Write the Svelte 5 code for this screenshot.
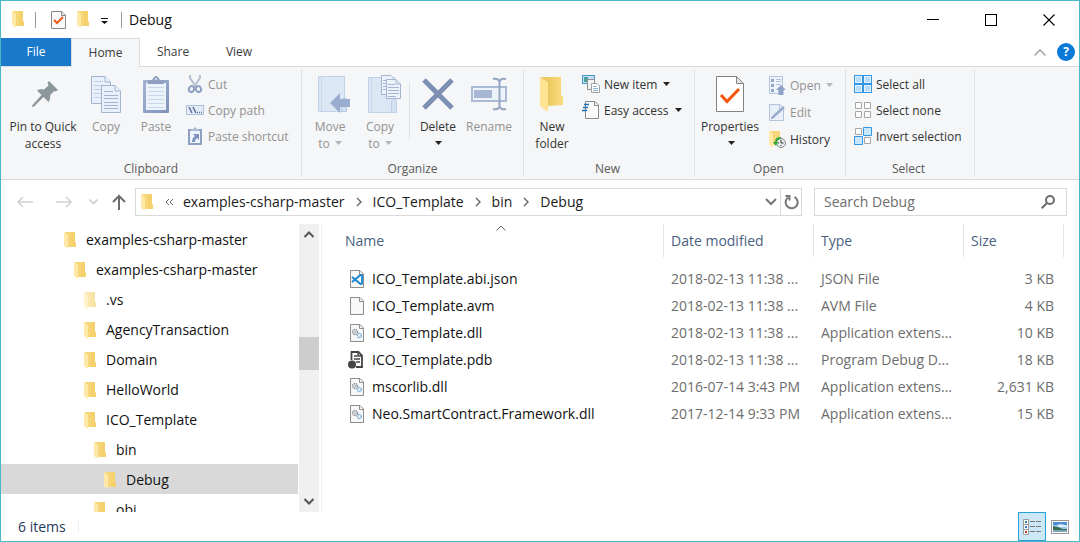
<script>
  const tabs = ['Home', 'Share', 'View'];
  const crumbs = ['examples-csharp-master', 'ICO_Template', 'bin', 'Debug'];
  const tree = [
    { name: 'examples-csharp-master', level: 0 },
    { name: 'examples-csharp-master', level: 1 },
    { name: '.vs', level: 2, hidden: true },
    { name: 'AgencyTransaction', level: 2 },
    { name: 'Domain', level: 2 },
    { name: 'HelloWorld', level: 2 },
    { name: 'ICO_Template', level: 2 },
    { name: 'bin', level: 3 },
    { name: 'Debug', level: 4 },
    { name: 'obj', level: 3 },
  ];
  const files = [
    { name: 'ICO_Template.abi.json', icon: 'code', date: '2018-02-13 11:38 ...', type: 'JSON File', size: '3 KB' },
    { name: 'ICO_Template.avm', icon: 'blank', date: '2018-02-13 11:38 ...', type: 'AVM File', size: '4 KB' },
    { name: 'ICO_Template.dll', icon: 'dll', date: '2018-02-13 11:38 ...', type: 'Application extens...', size: '10 KB' },
    { name: 'ICO_Template.pdb', icon: 'pdb', date: '2018-02-13 11:38 ...', type: 'Program Debug D...', size: '18 KB' },
    { name: 'mscorlib.dll', icon: 'dll', date: '2016-07-14 3:43 PM', type: 'Application extens...', size: '2,631 KB' },
    { name: 'Neo.SmartContract.Framework.dll', icon: 'dll', date: '2017-12-14 9:33 PM', type: 'Application extens...', size: '15 KB' },
  ];
  let selected = $state(8);
  let activeTab = $state('Home');
  let query = $state('');
</script>

{#snippet folder()}
  <svg width="13" height="17" viewBox="0 0 13 17" aria-hidden="true">
    <path d="M1 0H11V10L12 11V15H4Z" fill="#f7d679" />
    <path d="M7 0H11V10L12 11V15H7Z" fill="#f4cd66" opacity=".6" />
    <path d="M0 0L4 3V17L0 14Z" fill="#ffe9a8" />
  </svg>
{/snippet}

{#snippet caret(dim)}
  <svg class="caret" width="7" height="4" viewBox="0 0 7 4" aria-hidden="true"><path d="M0 0H7L3.5 4Z" fill={dim ? '#b4b6ba' : '#222'} /></svg>
{/snippet}

{#snippet chevron()}
  <svg width="6" height="10" viewBox="0 0 6 10" fill="none" stroke="#666" stroke-width="1.4" aria-hidden="true"><path d="M1 1L5 5L1 9" /></svg>
{/snippet}

<div class="window">
  <header class="titlebar">
    <div class="quick">
      {@render folder()}
      <span class="bar first"></span>
      <button aria-label="Properties" class="qprop">
        <svg width="15" height="19" viewBox="0 0 15 19"><path d="M.5 1.500H11L14.500 5V18.500H.5Z" fill="#f8f9fb" stroke="#888" /><path d="M10.500 1V5.500H15" fill="#ddd" stroke="#888" /><path d="M3 10L6 13L12 7" fill="none" stroke="#f05a1a" stroke-width="2" /></svg>
      </button>
      <button aria-label="New folder" class="qfolder">{@render folder()}</button>
      <button aria-label="Customize toolbar" class="qmore">
        <svg width="7" height="6" viewBox="0 0 7 6"><path d="M0 0H7V1H0ZM0 3H7L3.5 6Z" fill="#111" /></svg>
      </button>
      <span class="bar"></span>
      <h1>Debug</h1>
    </div>
    <div class="controls">
      <button aria-label="Minimize"><svg width="12" height="12"><path d="M0 5.500H12" stroke="#000" /></svg></button>
      <button aria-label="Maximize"><svg width="12" height="12"><rect x=".5" y=".5" width="11" height="11" fill="none" stroke="#000" /></svg></button>
      <button aria-label="Close"><svg width="12" height="12"><path d="M.5 .5L11.500 11.500M11.500 .5L.5 11.500" stroke="#000" stroke-width="1.100" /></svg></button>
    </div>
  </header>

  <nav class="tabs">
    <button class="file">File</button>
    {#each tabs as tab}
      <button class:active={activeTab === tab} onclick={() => (activeTab = tab)}>{tab}</button>
    {/each}
    <div class="help">
      <button aria-label="Collapse ribbon"><svg width="12" height="7" fill="none" stroke="#999" stroke-width="1.300"><path d="M.5 6.500L6 1L11.500 6.500" /></svg></button>
      <button class="round" aria-label="Help">?</button>
    </div>
  </nav>

  <section class="ribbon">
    <div class="group clipboard">
      <div class="tools">
        <button class="big pin">
          <span class="art"><svg width="30" height="26" viewBox="-4 0 30 26" fill="#8c979c"><path d="M17 0L26 9L23.500 10.500L22 10L18 14.500C18.500 17 18 19 16.500 21L11.500 16L2 25.500L.5 26L0 25.500L.5 24L9.500 14L5 9.500C7 8 9.500 8 12 8.500L16.500 4.500L15.500 2Z" /></svg></span>
          <span>Pin to Quick<br />access</span>
        </button>
        <button class="big copy" disabled>
          <span class="art"><svg width="30" height="37" viewBox="0 0 30 37" fill="#e8f0fb" stroke="#a3b3d0"><path d="M.5 .5H14L19.500 6V27.500H.5Z" /><path d="M14 .5V6H19.500" /><path d="M3 5.500H12M3 9.500H16M3 13.500H16M3 17.500H16M3 21.500H16" stroke="#c3cfe3" /><path d="M10.500 9.500H24L29.500 15V36.500H10.500Z" /><path d="M24 9.500V15H29.500" /><path d="M13 15.500H22M13 19.500H27M13 22.500H27M13 26.500H27M13 29.500H27M13 32.500H27" /></svg></span>
          <span>Copy</span>
        </button>
        <button class="big paste" disabled>
          <span class="art"><svg width="26" height="37" viewBox="0 0 26 37"><defs><linearGradient id="pb" x2="1" y2="1"><stop stop-color="#a4b4d4" /><stop offset="1" stop-color="#7e92bb" /></linearGradient></defs><rect y="4" width="26" height="33" rx="1" fill="url(#pb)" /><path d="M3 7H23V34H3Z" fill="#edf3fb" /><path d="M5 11.500H21M5 15.500H21M5 19.500H21M5 23.500H21M5 27.500H21M5 31.500H21" stroke="#c9d6ea" /><path d="M5 4H9L11 1Q13 -1 15 1L17 4H21V8H5Z" fill="#8fa0c0" /><circle cx="13" cy="3" r="1" fill="#e8eef8" /></svg></span>
          <span>Paste</span>
        </button>
        <div class="stack">
          <button disabled>
            <svg width="18" height="18" viewBox="0 0 18 18" fill="none" stroke-width="2"><path d="M4 0V3L9.500 11M14 0V3L8.500 11" stroke="#b4bfd2" /><ellipse cx="5.500" cy="14" rx="2.500" ry="3" stroke="#8c9fc3" transform="rotate(25 5.500 14)" /><ellipse cx="12.500" cy="14" rx="2.500" ry="3" stroke="#8c9fc3" transform="rotate(-25 12.500 14)" /></svg>
            Cut
          </button>
          <button disabled>
            <svg width="18" height="18" viewBox="0 0 18 18" fill="none"><rect x=".5" y="4.500" width="17" height="9" fill="#e3ecf9" stroke="#b0c0db" /><path d="M3 6L6 12M7 6L10 12" stroke="#5f7198" stroke-width="1.500" /><path d="M11 11.500H12M13 11.500H14M15 11.500H16" stroke="#5f7198" stroke-width="1.500" /></svg>
            Copy path
          </button>
          <button disabled>
            <svg width="18" height="18" viewBox="0 0 18 18"><path d="M2 2H16V18H2Z" fill="#8ea0c4" /><path d="M4 4H14V16H4Z" fill="#edf3fb" /><path d="M5 2H7L9 0L11 2H13V4H5Z" fill="#aebbd4" /><path d="M7 7H13V13L11 11Q9 12 9 15L6 15Q6 11 9 9Z" fill="#7e92bb" /></svg>
            Paste shortcut
          </button>
        </div>
      </div>
      <h2>Clipboard</h2>
    </div>

    <div class="group organize">
      <div class="tools">
        <button class="big" disabled>
          <span class="art"><svg width="40" height="38" viewBox="-8 0 40 38"><path d="M.5 1.500H26.500V36.500H.5Z" fill="#dce7f6" stroke="#bfd0e8" /><path d="M3.500 2V36" stroke="#c9d8ed" /><path d="M23.500 36.500V27Q25 21 28.500 24V36.500Z" fill="#d4e1f2" stroke="#b7c8e2" /><path d="M12 28L22 18V24H32V32H22V38Z" fill="#9badcf" /></svg></span>
          <span>Move<br />to {@render caret(true)}</span>
        </button>
        <button class="big" disabled>
          <span class="art"><svg width="42" height="38" viewBox="-9 0 42 38" stroke="#a3b3d0"><path d="M.5 2.500H26.500V37.500H.5Z" fill="#dce7f6" stroke="#bfd0e8" /><path d="M3.500 3V37" stroke="#c9d8ed" /><path d="M23.500 37.500V27Q25 22 28.500 25V37.500Z" fill="#d4e1f2" stroke="#bfd0e8" /><path d="M13.500 .5H23L26.500 4V19.500H13.500Z" fill="#edf3fb" /><path d="M18.500 4.500H28L32.500 9V23.500H18.500Z" fill="#edf3fb" /><path d="M28 4.500V9H32" fill="none" /><path d="M15 5.500H18M15 8.500H18M15 11.500H18M15 14.500H18M20 9.500H27M20 12.500H31M20 15.500H31M20 18.500H31M20 21.500H28" /></svg></span>
          <span>Copy<br />to {@render caret(true)}</span>
        </button>
        <span class="divider"></span>
        <button class="big">
          <span class="art"><svg width="32" height="32" viewBox="0 0 32 32"><path d="M2 2L30 30M30 2L2 30" stroke="#7d90b4" stroke-width="5" /></svg></span>
          <span>Delete<br />{@render caret(false)}</span>
        </button>
        <button class="big rename" disabled>
          <span class="art"><svg width="36" height="34" viewBox="0 0 36 34" fill="none"><rect x="1" y="10" width="34" height="14" fill="#edf3fb" stroke="#abbbd6" stroke-width="2" /><rect x="3" y="13" width="18" height="8" fill="#a7b7d3" /><path d="M22 2Q28 1 28.500 5V29Q28 33 22 32M35 2Q29 1 28.500 5M28.500 29Q29 33 35 32" stroke="#95a6c5" stroke-width="2" /></svg></span>
          <span>Rename</span>
        </button>
      </div>
      <h2>Organize</h2>
    </div>

    <div class="group new">
      <div class="tools">
        <button class="big">
          <span class="art"><svg width="24" height="35" viewBox="0 0 24 35"><defs><linearGradient id="fb"><stop offset=".3" stop-color="#eac75f" /><stop offset="1" stop-color="#fbdc80" /></linearGradient></defs><path d="M1 0H21V18L23 20V28L8 29Z" fill="url(#fb)" /><path d="M0 0L8 5V35L0 29Z" fill="#ffe292" /></svg></span>
          <span>New<br />folder</span>
        </button>
        <div class="stack">
          <button>
            <svg width="18" height="18" viewBox="0 0 18 18"><rect x=".5" y=".5" width="12" height="8" fill="#bfe0f7" stroke="#4c93c9" /><path d="M2 2H6V7H2Z" fill="#4a9f96" /><path d="M5.500 4.500H12.500V14.500H5.500Z" fill="#f5f5f5" stroke="#909090" /><path d="M9.500 8.500H15L17.500 11V17.500H9.500Z" fill="#fff" stroke="#a0a0a0" /><path d="M11 11.500H15M11 13.500H16M11 15.500H16" stroke="#8fb4d8" /></svg>
            New item {@render caret(false)}
          </button>
          <button>
            <svg width="18" height="18" viewBox="0 0 18 18"><path d="M3.500 .5H13L16.500 4V17.500H3.500Z" fill="#fafafa" stroke="#8a8a8a" /><path d="M12.500 1V4.500H16" fill="none" stroke="#8a8a8a" /><path d="M2 3.500H7M1 6.500H6M0 9.500H5" stroke="#1d6fb8" stroke-width="1.300" /></svg>
            Easy access {@render caret(false)}
          </button>
        </div>
      </div>
      <h2>New</h2>
    </div>

    <div class="group open">
      <div class="tools">
        <button class="big prop">
          <span class="art"><svg width="28" height="36" viewBox="0 0 28 36"><path d="M.5 .5H20.500L27.500 7.500V35.500H.5Z" fill="#fff" stroke="#828282" /><path d="M20.500 .5V7.500H27.500Z" fill="#e6e6e6" stroke="#828282" /><path d="M5 19L11 25.500L23 13" fill="none" stroke="#f2550f" stroke-width="3" /></svg></span>
          <span>Properties<br />{@render caret(false)}</span>
        </button>
        <div class="stack">
          <button disabled>
            <svg width="18" height="19" viewBox="0 0 18 19"><path d="M.5 .5H13.500V17.500H.5Z" fill="#edf3fb" stroke="#b4c3dc" /><path d="M2 3H5V6H2ZM2 8H5V11H2ZM2 13H5V16H2Z" fill="#94a5c8" /><path d="M7 3.500H12M7 5.500H12M7 8.500H12" stroke="#b4c3dc" /><path d="M12 9L17 14H14.500V19H9.500V14H7Z" fill="#8ea0c4" /></svg>
            Open {@render caret(true)}
          </button>
          <button disabled>
            <svg width="18" height="19" viewBox="0 0 18 19"><path d="M.5 1.500H11L14.500 5V17.500H.5Z" fill="#e9f0fa" stroke="#b4c3dc" /><path d="M10.500 1.500V5.500H14.500" fill="none" stroke="#b4c3dc" /><path d="M4 14L15 4" stroke="#9aaccc" stroke-width="2.500" /><path d="M2 16L3 13L5 15Z" fill="#7e92bb" /></svg>
            Edit
          </button>
          <button>
            <svg width="18" height="19" viewBox="0 0 18 19"><path d="M1 1H11V15H3Z" fill="#f7d679" /><path d="M0 1L4 3V18L0 15Z" fill="#ffe9a8" /><circle cx="12" cy="13" r="4.500" fill="#e8ecec" stroke="#858b8b" /><path d="M12 10V13H14.500M9 13H10M12 16V15" stroke="#333" fill="none" /><path d="M12 7Q6 7 6 12H4L7 16L9 12H8Q8 9 12 9Z" fill="#2ea836" /></svg>
            History
          </button>
        </div>
      </div>
      <h2>Open</h2>
    </div>

    <div class="group select">
      <div class="tools">
        <div class="stack">
          <button>
            <svg width="18" height="18" viewBox="0 0 18 18"><path d="M0 0H18V18H0Z" fill="#3596e3" /><path d="M1 1H8V8H1ZM10 1H17V8H10ZM1 10H8V17H1ZM10 10H17V17H10Z" fill="#e4f3fe" /><path d="M2 2H7V7H2ZM11 2H16V7H11ZM2 11H7V16H2ZM11 11H16V16H11Z" fill="#b5dcfa" /></svg>
            Select all
          </button>
          <button>
            <svg width="18" height="18" viewBox="0 0 18 18" fill="#fcfcfc" stroke="#a6a6a6"><path d="M1.500 1.500H7.500V7.500H1.500ZM10.500 1.500H16.500V7.500H10.500ZM1.500 10.500H7.500V16.500H1.500ZM10.500 10.500H16.500V16.500H10.500Z" /></svg>
            Select none
          </button>
          <button>
            <svg width="18" height="18" viewBox="0 0 18 18"><path d="M1.500 1.500H7.500V7.500H1.500ZM10.500 10.500H16.500V16.500H10.500Z" fill="#fcfcfc" stroke="#a6a6a6" /><path d="M9.500 .5H17.500V8.500H9.500ZM.5 9.500H8.500V17.500H.5Z" fill="#c9e7fc" stroke="#3596e3" /></svg>
            Invert selection
          </button>
        </div>
      </div>
      <h2>Select</h2>
    </div>
  </section>

  <div class="navrow">
    <div class="arrows">
      <button class="back" aria-label="Back" disabled><svg width="16" height="12" fill="none" stroke="#d2d2d2" stroke-width="1.600"><path d="M16 6H1M6 1L1 6L6 11" /></svg></button>
      <button class="forward" aria-label="Forward" disabled><svg width="16" height="12" fill="none" stroke="#d2d2d2" stroke-width="1.600"><path d="M0 6H15M10 1L15 6L10 11" /></svg></button>
      <button class="recent" aria-label="Recent locations" disabled><svg width="9" height="6" fill="none" stroke="#cfcfcf" stroke-width="1.600"><path d="M.5 .5L4.500 4.500L8.500 .5" /></svg></button>
      <button aria-label="Up"><svg width="14" height="16" fill="none" stroke="#6b6b6b" stroke-width="2"><path d="M7 16V2M1 8L7 2L13 8" /></svg></button>
    </div>
    <div class="address">
      {@render folder()}
      <svg class="more" width="8" height="8" fill="none" stroke="#666"><path d="M4 1L1 4L4 7M8 1L5 4L8 7" /></svg>
      <div class="crumbs">
        {#each crumbs as crumb, i}
          {#if i > 0}{@render chevron()}{/if}
          <button>{crumb}</button>
        {/each}
      </div>
      <button class="drop" aria-label="Previous locations"><svg width="12" height="8" fill="none" stroke="#777" stroke-width="2"><path d="M1 1L6 6L11 1" /></svg></button>
      <button class="refresh" aria-label="Refresh"><svg width="15" height="16" fill="none" stroke="#777" stroke-width="2"><path d="M10.500 3A6 6 0 1 1 4 3.500M1.500 2H5.500V6.500" /></svg></button>
    </div>
    <label class="search">
      <input type="text" bind:value={query} placeholder="Search Debug" aria-label="Search Debug" />
      <svg width="14" height="14" fill="none" stroke="#6c6c6c" stroke-width="2"><circle cx="9" cy="5" r="4" /><path d="M6 8L.7 13.300" /></svg>
    </label>
  </div>

  <main>
    <div class="tree">
      {#each tree as node, i}
        <button class:selected={selected === i} class:faded={node.hidden} style="--level: {node.level}" onclick={() => (selected = i)}>
          {@render folder()}{node.name}
        </button>
      {/each}
    </div>
    <div class="scroll">
      <svg width="10" height="7" fill="none" stroke="#555" stroke-width="2"><path d="M.5 6L5 1.500L9.500 6" /></svg>
      <span class="thumb"></span>
      <svg width="10" height="7" fill="none" stroke="#555" stroke-width="2"><path d="M.5 1L5 5.500L9.500 1" /></svg>
    </div>
    <div class="list">
      <table>
        <colgroup><col /><col class="mid" /><col class="mid" /><col class="last" /></colgroup>
        <thead>
          <tr>
            <th class="name"><svg class="sort" width="10" height="6" fill="none" stroke="#666"><path d="M.5 5.500L5 1L9.500 5.500" /></svg>Name</th>
            <th>Date modified</th><th>Type</th><th>Size</th>
          </tr>
        </thead>
        <tbody>
          {#each files as file}
            <tr>
              <td class="name"><div class="entry">
                <svg width="16" height="18" viewBox="0 0 16 18" aria-hidden="true">
                  {#if file.icon === 'pdb'}
                    <path d="M3.500 9V1H10.500L14 4.500V16H8" fill="#fff" stroke="#444" stroke-width="1.800" />
                    <path d="M10 1V5H14M6 5H9M6 8H12M8 11H12" fill="none" stroke="#444" stroke-width="1.500" />
                    <circle cx="4" cy="13.500" r="4" fill="#444" />
                  {:else}
                    <path d="M2.500 .5H12L15.500 4V17.500H2.500Z" fill="#f8f8f8" stroke="#8d8d8d" />
                    <path d="M11.500 .5V4.500H15.500" fill="none" stroke="#8d8d8d" />
                    {#if file.icon === 'code'}
                      <path d="M12 4.500L14 5.500V13.500L12 14.500M12.500 5L4 12M12.500 14L4 7" fill="none" stroke="#1583d0" stroke-width="1.800" />
                    {:else if file.icon === 'dll'}
                      <circle cx="7" cy="8" r="2.400" fill="none" stroke="#858d95" stroke-width="1.500" stroke-dasharray="1.200 .6" />
                      <circle cx="7" cy="8" r=".8" fill="#888" />
                      <circle cx="11.300" cy="11.500" r="2" fill="none" stroke="#79afd6" stroke-width="1.500" stroke-dasharray="1.200 .5" />
                    {/if}
                  {/if}
                </svg>{file.name}</div></td>
              <td>{file.date}</td><td>{file.type}</td><td class="size">{file.size}</td>
            </tr>
          {/each}
        </tbody>
      </table>
    </div>
  </main>

  <footer>
    <span class="count">6 items</span>
    <div class="views">
      <button class="on" aria-label="Details view">
        <svg width="18" height="16" viewBox="0 0 18 16" fill="#fff" stroke="#999"><path d="M.5 .5H5.500V5.500H.5ZM.5 5.500H5.500V10.500H.5ZM.5 10.500H5.500V15.500H.5Z" /><path d="M2 2H4V4H2Z" fill="#357c91" stroke="none" /><path d="M2 7H4V9H2Z" fill="#3d75cf" stroke="none" /><path d="M2 12H4V14H2Z" fill="#cf2c20" stroke="none" /><path d="M7 2.500H12M13 2.500H18M7 7.500H12M13 7.500H18M7 12.500H12M13 12.500H18" stroke="#777" /></svg>
      </button>
      <button aria-label="Large icons view">
        <svg width="18" height="14" viewBox="0 0 18 14"><rect x=".5" y=".5" width="17" height="13" fill="#fff" stroke="#979797" /><path d="M2 2H16V12H2Z" fill="#9ac9ef" /><path d="M2 2H16V5H2Z" fill="#4d8fd9" /><path d="M6 5Q11 3 16 6V7H8Z" fill="#e1effa" /><path d="M2 6Q8 7 12 9H16V10H2Z" fill="#3c6b56" /><path d="M2 10H16V12H2Z" fill="#7aa7b5" /></svg>
      </button>
    </div>
  </footer>
</div>

<style>
  :global(body) { margin: 0; background: #fff; }
  * { box-sizing: border-box; }
  .window {
    display: flex; flex-direction: column; height: 100vh; overflow: hidden;
    border: 1px solid #4ab8c6; background: #fff; color: #111;
    font: 14px/20px "Open Sans", "Noto Sans", sans-serif;
  }
  button { margin: 0; padding: 0; border: 0; background: none; font: inherit; color: inherit; text-align: inherit; }
  h1, h2 { margin: 0; font-weight: 400; }
  svg { flex: none; }

  .titlebar { display: flex; justify-content: space-between; height: 37px; flex: none; }
  .quick { display: flex; align-items: center; padding-left: 11px; }
  .quick svg { display: block; }
  .bar { width: 1px; height: 16px; background: #999; }
  .bar.first { margin: 0 15px 0 10px; }
  .qfolder { margin: 0 11px; }
  .qmore { margin: 2px 13px 0 0; }
  h1 { margin-left: 7px; font-size: 14px; }
  .controls { display: flex; padding-right: 1px; }
  .controls button { display: grid; place-items: center; width: 58px; }

  .tabs { display: flex; flex: none; height: 28px; font-size: 12px; color: #3b3b3b; }
  .tabs > button { width: 66px; text-align: center; }
  .tabs > .file { width: 70px; background: #1979ca; color: #fff; }
  .tabs > .active { width: 69px; margin-bottom: -1px; padding-bottom: 1px; z-index: 1; border: 1px solid #dadbdc; border-bottom: 0; background: #f5f6f7; }
  .help { display: flex; align-items: center; gap: 11px; margin-left: auto; padding-right: 4px; }
  .help svg { display: block; }
  .round { width: 18px; height: 18px; border-radius: 50%; background: #0b79d8; color: #fff; font-weight: 700; line-height: 18px; text-align: center; }

  .ribbon { display: flex; flex: none; height: 114px; padding: 2px 0; border: solid #dadbdc; border-width: 1px 0; background: #f5f6f7; font-size: 12px; line-height: 17px; color: #333; }
  .group { display: flex; flex-direction: column; justify-content: space-between; border-right: 1px solid #e2e3e4; }
  .group h2 { padding-right: 3px; font-size: 12px; text-align: center; color: #5a5a5a; }
  .group.clipboard h2, .group.organize h2 { padding-right: 0; }
  .clipboard { width: 301px; }
  .organize { width: 222px; }
  .new { width: 171px; }
  .open { width: 151px; }
  .select { width: 129px; }
  .tools { display: flex; }
  .big { display: flex; flex-direction: column; align-items: center; width: 50px; text-align: center; white-space: nowrap; }
  .big .art { display: grid; place-items: center; height: 49px; flex: none; padding-top: 1px; }
  .pin { width: 76px; margin-left: 4px; }
  .paste { margin-right: 5px; }
  .rename { margin-left: 1px; }
  .organize .tools { padding-left: 3px; }
  .new .big { width: 56px; margin-right: 2px; }
  .prop { width: 70px; margin-right: 4px; }
  .select .stack { margin-left: 8px; }
  .divider { width: 1px; height: 56px; margin: 14px 3px 0 4px; background: #dfe0e2; }
  button:disabled { color: #929292; }
  .caret { display: inline-block; margin-left: 2px; vertical-align: 3px; }
  .stack { display: flex; flex-direction: column; gap: 8px; padding-top: 6px; }
  .stack button { display: flex; align-items: center; gap: 4px; height: 18px; white-space: nowrap; }
  .open .stack { gap: 9px; padding-top: 7px; }
  .open .stack button { gap: 3px; }

  .navrow { display: flex; align-items: center; flex: none; height: 44px; padding: 0 12px 0 16px; }
  .arrows { display: flex; align-items: center; width: 118px; }
  .arrows svg { display: block; }
  .back { margin-right: 23px; }
  .forward { margin-right: 17px; }
  .recent { margin-right: 14px; }
  .address, .search { display: flex; align-items: center; height: 28px; border: 1px solid #d9d9d9; }
  .address { flex: 1; padding-left: 5px; }
  .more { margin: 0 10px 0 11px; }
  .crumbs { display: flex; align-items: center; gap: 11px; flex: 1; color: #1a1a1a; }
  .drop { display: grid; place-items: center; width: 18px; }
  .refresh { display: grid; place-items: center; width: 21px; height: 26px; border-left: 1px solid #d9d9d9; }
  .search { width: 253px; margin-left: 12px; padding: 0 11px 0 9px; }
  input { flex: 1; min-width: 0; padding: 0; border: 0; outline: 0; background: none; font: inherit; }
  input::placeholder { color: #6d6d6d; opacity: 1; }

  main { display: flex; flex: 1; min-height: 0; overflow: hidden; }
  .tree { width: 297px; flex: none; overflow: hidden; }
  .tree button { display: flex; align-items: center; gap: 9px; width: 100%; height: 30px; padding-top: 2px; padding-left: calc(63px + var(--level) * 10px); color: #111; }
  .tree .selected { background: #d9d9d9; }
  .faded svg { opacity: .6; }
  .scroll { display: flex; flex-direction: column; align-items: center; justify-content: space-between; width: 20px; flex: none; margin: 0 2px 0 1px; padding: 7px 0; background: #f0f0f0; }
  .thumb { width: 100%; height: 33px; margin-bottom: 30px; background: #cdcdcd; }
  .list { flex: 1; min-width: 0; padding-right: 15px; border-left: 1px solid #f2f2f2; }
  table { width: 100%; border-collapse: separate; border-spacing: 0; table-layout: fixed; }
  .mid { width: 150px; }
  .last { width: 100px; }
  th { position: relative; height: 33px; padding: 0 7px; border-right: 1px solid #e3e3e3; font-weight: 400; text-align: left; color: #4a6080; }
  th.name { padding-left: 23px; }
  .sort { position: absolute; top: 1px; left: 50%; margin-left: 3px; }
  td { height: 27px; padding: 0 7px; color: #6d6d6d; white-space: nowrap; overflow: hidden; }
  tbody::before { content: ""; display: block; height: 8px; }
  td.name { padding-left: 26px; color: #111; }
  .entry { display: flex; align-items: center; gap: 8px; }
  td.size { padding-right: 10px; text-align: right; }

  footer { display: flex; align-items: center; justify-content: space-between; height: 29px; flex: none; padding: 0 5px 0 17px; color: #1e395b; }
  .count { padding-right: 12px; border-right: 1px solid #eee; line-height: 12px; }
  .views { display: flex; }
  .views button { display: grid; place-items: center; width: 28px; height: 29px; }
  .views .on { border: 1px solid #26a0da; background: #cce8f6; }
</style>
